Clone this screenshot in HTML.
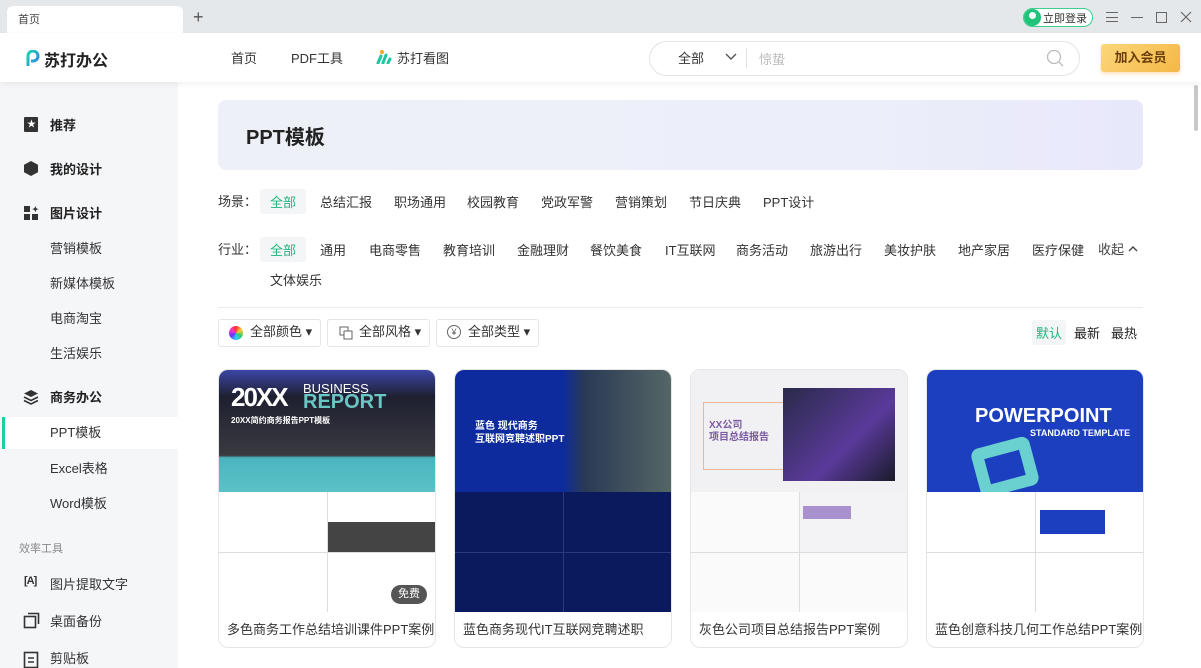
<!DOCTYPE html>
<html><head><meta charset="utf-8"><style>
*{margin:0;padding:0;box-sizing:border-box}
body{width:1201px;height:668px;overflow:hidden;position:relative;background:#fff;font-family:"Liberation Sans","Noto Sans CJK SC",sans-serif;color:#333;font-size:13px}
.a{position:absolute;white-space:nowrap}
.tb{left:0;top:0;width:1201px;height:33px;background:#e5e8eb}
.tab{left:7px;top:6px;width:176px;height:28px;background:#fff;border-radius:6px 6px 0 0}
.hd{left:0;top:33px;width:1201px;height:49px;background:#fff;box-shadow:0 2px 6px rgba(0,0,0,.06);z-index:2}
.sb{left:0;top:82px;width:178px;height:586px;background:#f5f6f8}
.si{left:50px;font-size:13px;color:#333}
.sib{left:50px;font-size:13px;font-weight:bold;color:#222}
.f{font-size:13px;color:#333}
.pill{background:#f3f5f6;border-radius:3px}
.fb{border:1px solid #e3e5e8;border-radius:3px;height:28px;top:319px;font-size:13px;color:#333;line-height:24px;padding-left:12px}
.card{top:369px;width:218px;height:279px;border:1px solid #e6e6e6;border-radius:10px;overflow:hidden;background:#fff}
.card .t{position:absolute;left:8px;top:249px;font-size:13px;color:#333;white-space:nowrap}
.g{position:absolute;top:122px;left:0;width:216px;height:120px;display:grid;grid-template-columns:1fr 1fr;grid-template-rows:1fr 1fr;gap:1px}
</style></head><body>
<div class="a tb"></div>
<div class="a tab"></div>
<div class="a" style="left:18px;top:11px;font-size:11px;color:#444">首页</div>
<div class="a" style="left:193px;top:7px;font-size:18px;color:#555">+</div>
<div class="a" style="left:1023px;top:8px;width:70px;height:19px;border:1px solid #3ccf8e;border-radius:10px;background:#fff"></div>
<div class="a" style="left:1024px;top:9px;width:17px;height:17px;border-radius:50%;background:#1fc47a"></div>
<div class="a" style="left:1029px;top:12px;width:7px;height:7px;border-radius:50%;background:#fff"></div>
<div class="a" style="left:1043px;top:10px;font-size:11px;color:#333">立即登录</div>
<div class="a" style="left:1106px;top:12px;width:12px;height:10px;border-top:1px solid #666;border-bottom:1px solid #666"></div>
<div class="a" style="left:1106px;top:17px;width:12px;height:1px;background:#666"></div>
<div class="a" style="left:1131px;top:17px;width:12px;height:1px;background:#666"></div>
<div class="a" style="left:1156px;top:12px;width:11px;height:11px;border:1px solid #666"></div>
<svg class="a" style="left:1180px;top:11px" width="12" height="12"><path d="M1 1l10 10M11 1L1 11" stroke="#666" stroke-width="1.2"/></svg>

<div class="a hd">
<svg class="a" style="left:26px;top:17px" width="14" height="17" viewBox="0 0 14 17"><defs><linearGradient id="lg" x1="0" y1="0" x2="1" y2="1"><stop offset="0" stop-color="#1fd6b0"/><stop offset="1" stop-color="#2b7cf0"/></linearGradient></defs><path d="M2 16V6a5 5 0 1 1 5 5H5" fill="none" stroke="url(#lg)" stroke-width="3"/></svg>
<div class="a" style="left:44px;top:14px;font-size:16px;font-weight:bold;color:#222">苏打办公</div>
<div class="a" style="left:231px;top:15px;font-size:13px">首页</div>
<div class="a" style="left:291px;top:15px;font-size:13px">PDF工具</div>
<svg class="a" style="left:376px;top:17px" width="16" height="14" viewBox="0 0 16 14"><path d="M2 13L5 6M7 13L10 5M12 13L14 9" stroke="#1fc4a0" stroke-width="3" stroke-linecap="round"/><circle cx="6" cy="2" r="2" fill="#f5a623"/></svg>
<div class="a" style="left:397px;top:15px;font-size:13px">苏打看图</div>
<div class="a" style="left:649px;top:8px;width:431px;height:35px;border:1px solid #e3e3e3;border-radius:18px"></div>
<div class="a" style="left:678px;top:15px;font-size:13px">全部</div>
<svg class="a" style="left:725px;top:20px" width="12" height="8"><path d="M1 1l5 5 5-5" fill="none" stroke="#555" stroke-width="1.4"/></svg>
<div class="a" style="left:746px;top:15px;width:1px;height:20px;background:#e2e2e2"></div>
<div class="a" style="left:759px;top:16px;font-size:13px;color:#bbb">惊蛰</div>
<svg class="a" style="left:1046px;top:16px" width="18" height="18"><circle cx="8" cy="8" r="6.5" fill="none" stroke="#bbb" stroke-width="1.3"/><path d="M13 13l4 4" stroke="#bbb" stroke-width="1.3"/></svg>
<div class="a" style="left:1101px;top:11px;width:79px;height:28px;border-radius:3px;background:linear-gradient(135deg,#fcd77a,#f4b746);box-shadow:0 2px 4px rgba(240,170,60,.35);color:#6b3e0c;font-weight:bold;font-size:13px;text-align:center;line-height:27px">加入会员</div>
</div>

<div class="a sb"></div>
<div class="a" style="left:2px;top:417px;width:176px;height:32px;background:#fff"></div>
<div class="a" style="left:2px;top:417px;width:3px;height:32px;background:#1ccfa0"></div>
<div class="a" style="left:24px;top:117px;width:14px;height:15px;background:#333;border-radius:1px"></div><div class="a" style="left:27px;top:117px;font-size:9px;color:#fff">★</div>
<div class="a" style="left:24px;top:161px;width:14px;height:15px;background:#333;clip-path:polygon(50% 0,100% 25%,100% 75%,50% 100%,0 75%,0 25%)"></div>
<div class="a" style="left:24px;top:206px;width:6px;height:6px;background:#333"></div><div class="a" style="left:24px;top:214px;width:6px;height:6px;background:#333"></div><div class="a" style="left:32px;top:214px;width:6px;height:6px;background:#333"></div><div class="a" style="left:32px;top:205px;font-size:8px;font-weight:bold">✦</div>
<svg class="a" style="left:23px;top:389px" width="16" height="16"><path d="M8 1l7 3.5-7 3.5-7-3.5z" fill="#333"/><path d="M1 8l7 3.5 7-3.5M1 11.5l7 3.5 7-3.5" fill="none" stroke="#333" stroke-width="1.6"/></svg>
<div class="a sib" style="top:115px">推荐</div>
<div class="a sib" style="top:159px">我的设计</div>
<div class="a sib" style="top:203px">图片设计</div>
<div class="a si" style="top:238px">营销模板</div>
<div class="a si" style="top:273px">新媒体模板</div>
<div class="a si" style="top:308px">电商淘宝</div>
<div class="a si" style="top:343px">生活娱乐</div>
<div class="a sib" style="top:387px">商务办公</div>
<div class="a si" style="top:422px">PPT模板</div>
<div class="a si" style="top:458px">Excel表格</div>
<div class="a si" style="top:493px">Word模板</div>
<div class="a" style="left:19px;top:540px;font-size:11px;color:#888">效率工具</div>
<div class="a" style="left:24px;top:575px;font-size:11px;font-weight:bold;letter-spacing:-1px">[A]</div>
<div class="a si" style="top:574px">图片提取文字</div>
<svg class="a" style="left:23px;top:612px" width="17" height="17"><rect x="1.5" y="4.5" width="11" height="11" fill="none" stroke="#333" stroke-width="1.6"/><path d="M5 1.5h10.5V12" fill="none" stroke="#333" stroke-width="1.6"/></svg>
<div class="a si" style="top:611px">桌面备份</div>
<svg class="a" style="left:23px;top:650px" width="16" height="18"><rect x="1.5" y="2.5" width="13" height="15" fill="none" stroke="#333" stroke-width="1.6"/><path d="M5 8h6M5 12h6" stroke="#333" stroke-width="1.6"/></svg>
<div class="a si" style="top:648px">剪贴板</div>
<div class="a" style="left:1194px;top:85px;width:4px;height:46px;background:#c8c8c8;border-radius:2px"></div>

<div class="a" style="left:218px;top:100px;width:925px;height:70px;border-radius:8px;background:linear-gradient(90deg,#eef0f8,#eceefa 70%,#e8e8fb)"></div>
<div class="a" style="left:246px;top:121px;font-size:20px;font-weight:bold;color:#222">PPT模板</div>

<div class="a f" style="left:218px;top:191px;color:#333">场景：</div>
<div class="a pill" style="left:260px;top:189px;width:46px;height:25px"></div>
<div class="a f" style="left:270px;top:192px;color:#1fb57d">全部</div>
<div class="a f" style="left:320px;top:192px">总结汇报</div>
<div class="a f" style="left:394px;top:192px">职场通用</div>
<div class="a f" style="left:467px;top:192px">校园教育</div>
<div class="a f" style="left:541px;top:192px">党政军警</div>
<div class="a f" style="left:615px;top:192px">营销策划</div>
<div class="a f" style="left:689px;top:192px">节日庆典</div>
<div class="a f" style="left:763px;top:192px">PPT设计</div>

<div class="a f" style="left:218px;top:239px">行业：</div>
<div class="a pill" style="left:260px;top:237px;width:46px;height:25px"></div>
<div class="a f" style="left:270px;top:240px;color:#1fb57d">全部</div>
<div class="a f" style="left:320px;top:240px">通用</div>
<div class="a f" style="left:369px;top:240px">电商零售</div>
<div class="a f" style="left:443px;top:240px">教育培训</div>
<div class="a f" style="left:517px;top:240px">金融理财</div>
<div class="a f" style="left:590px;top:240px">餐饮美食</div>
<div class="a f" style="left:665px;top:240px">IT互联网</div>
<div class="a f" style="left:736px;top:240px">商务活动</div>
<div class="a f" style="left:810px;top:240px">旅游出行</div>
<div class="a f" style="left:884px;top:240px">美妆护肤</div>
<div class="a f" style="left:958px;top:240px">地产家居</div>
<div class="a f" style="left:1032px;top:240px">医疗保健</div>
<div class="a f" style="left:1098px;top:239px;color:#444">收起</div>
<svg class="a" style="left:1128px;top:245px" width="10" height="7"><path d="M1 6l4-4 4 4" fill="none" stroke="#444" stroke-width="1.4"/></svg>
<div class="a f" style="left:270px;top:270px">文体娱乐</div>
<div class="a" style="left:218px;top:307px;width:925px;height:1px;background:#ececec"></div>

<div class="a fb" style="left:218px;width:103px;padding-left:31px">全部颜色 ▾</div>
<div class="a" style="left:229px;top:326px;width:14px;height:14px;border-radius:50%;background:conic-gradient(#f33,#fc3,#3c6,#3cf,#63f,#f3c,#f33)"></div>
<div class="a fb" style="left:327px;width:103px;padding-left:31px">全部风格 ▾</div>
<svg class="a" style="left:339px;top:326px" width="14" height="14"><rect x="1" y="1" width="8" height="8" fill="none" stroke="#666"/><rect x="5" y="5" width="8" height="8" fill="#fff" stroke="#666"/></svg>
<div class="a fb" style="left:436px;width:103px;padding-left:31px">全部类型 ▾</div>
<div class="a" style="left:447px;top:325px;width:14px;height:14px;border:1px solid #666;border-radius:50%;font-size:9px;text-align:center;line-height:12px;color:#666">¥</div>
<div class="a pill" style="left:1032px;top:320px;width:34px;height:25px"></div>
<div class="a f" style="left:1036px;top:323px;color:#1fb57d">默认</div>
<div class="a f" style="left:1074px;top:323px;color:#222">最新</div>
<div class="a f" style="left:1111px;top:323px;color:#222">最热</div>

<div class="a card" style="left:218px">
 <div class="a" style="left:0;top:0;width:216px;height:122px;background:linear-gradient(180deg,#3b46a6 0,#1e2030 22%,#3a3a40 70%,#4ab5bf 72%,#5cc1c7 100%)"></div>
 <div class="a" style="left:12px;top:12px;font-size:26px;font-weight:bold;color:#fff;letter-spacing:-2px">20XX</div>
 <div class="a" style="left:84px;top:11px;font-size:13px;color:#fff">BUSINESS</div>
 <div class="a" style="left:84px;top:21px;font-size:20px;font-weight:bold;color:#6ac6c4">REPORT</div>
 <div class="a" style="left:12px;top:45px;font-size:8px;font-weight:bold;color:#fff">20XX简约商务报告PPT模板</div>
 <div class="g" style="background:#ddd"><div style="background:#fff"></div><div style="background:linear-gradient(180deg,#fff 50%,#444 50%)"></div><div style="background:#fff"></div><div style="background:#fff"></div></div>
 <div class="a" style="left:172px;top:215px;width:36px;height:19px;border-radius:10px;background:#555;color:#fff;font-size:11px;text-align:center;line-height:19px">免费</div>
 <div class="t">多色商务工作总结培训课件PPT案例</div>
</div>
<div class="a card" style="left:454px">
 <div class="a" style="left:0;top:0;width:216px;height:122px;background:linear-gradient(90deg,#0d2b9c 0,#0d2b9c 50%,#2a3a55 60%,#566 100%)"></div>
 <div class="a" style="left:20px;top:50px;font-size:10px;font-weight:bold;color:#fff;line-height:13px">蓝色 现代商务<br>互联网竞聘述职PPT</div>
 <div class="g" style="background:#2a3a80"><div style="background:#0b1a5c"></div><div style="background:#0b1a5c"></div><div style="background:#0b1a5c"></div><div style="background:#0b1a5c"></div></div>
 <div class="t">蓝色商务现代IT互联网竞聘述职</div>
</div>
<div class="a card" style="left:690px">
 <div class="a" style="left:0;top:0;width:216px;height:122px;background:#f1f1f3"></div>
 <div class="a" style="left:12px;top:32px;width:90px;height:68px;border:1px solid #e9b899"></div>
 <div class="a" style="left:92px;top:18px;width:112px;height:93px;background:linear-gradient(135deg,#2a2a4a,#5a3a9a 60%,#1a1a2a)"></div>
 <div class="a" style="left:18px;top:50px;font-size:10px;font-weight:bold;color:#7a5aa0;line-height:12px">XX公司<br>项目总结报告</div>
 <div class="g" style="background:#ddd"><div style="background:#fafafa"></div><div style="background:#f3f3f5"></div><div style="background:#fafafa"></div><div style="background:#fafafa"></div></div>
 <div class="a" style="left:112px;top:136px;width:48px;height:13px;background:#a991cf"></div>
 <div class="t">灰色公司项目总结报告PPT案例</div>
</div>
<div class="a card" style="left:926px">
 <div class="a" style="left:0;top:0;width:216px;height:122px;background:#1c3fbf"></div>
 <div class="a" style="left:48px;top:72px;width:60px;height:50px;border:12px solid #6ad0d0;border-radius:8px;transform:rotate(-15deg)"></div>
 <div class="a" style="left:48px;top:35px;font-size:20px;font-weight:bold;color:#fff">POWERPOINT</div>
 <div class="a" style="left:103px;top:58px;font-size:9px;font-weight:bold;color:#fff">STANDARD TEMPLATE</div>
 <div class="g" style="background:#ddd"><div style="background:#fff"></div><div style="background:#fff"></div><div style="background:#fff"></div><div style="background:#fff"></div></div>
 <div class="a" style="left:113px;top:140px;width:65px;height:24px;background:#1c3fbf"></div>
 <div class="t">蓝色创意科技几何工作总结PPT案例</div>
</div>
</body></html>
